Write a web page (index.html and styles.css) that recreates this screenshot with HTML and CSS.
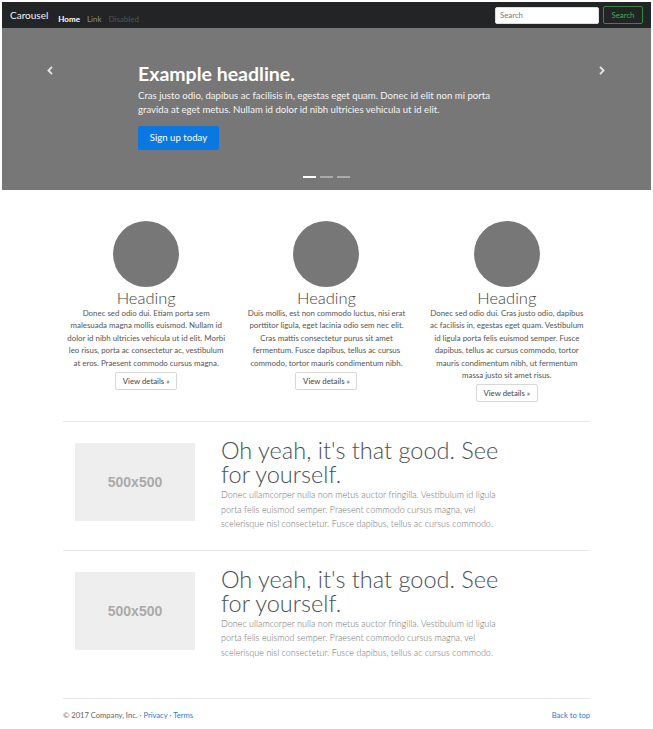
FILE: index.html
```html
<!DOCTYPE html>
<html lang="en">
<head>
<meta charset="utf-8">
<title>Carousel Template</title>
<link rel="stylesheet" href="styles.css">
</head>
<body>
<div class="page">
  <nav class="navbar">
    <a class="brand" href="#">Carousel</a>
    <ul class="nav">
      <li><a class="nav-link active" href="#">Home</a></li>
      <li><a class="nav-link" href="#">Link</a></li>
      <li><a class="nav-link disabled" href="#">Disabled</a></li>
    </ul>
    <form class="search">
      <input class="search-input" type="text" placeholder="Search">
      <button class="search-btn" type="button">Search</button>
    </form>
  </nav>

  <section class="carousel">
    <a class="ctrl prev" href="#" aria-label="Previous">
      <svg width="6" height="9" viewBox="0 0 6 9"><path d="M5 0.8 L1.4 4.5 L5 8.2" fill="none" stroke="#e6e6e6" stroke-width="1.8"/></svg>
    </a>
    <div class="caption">
      <h1 class="headline">Example headline.</h1>
      <p class="caption-text">Cras justo odio, dapibus ac facilisis in, egestas eget quam. Donec id elit non mi porta gravida at eget metus. Nullam id dolor id nibh ultricies vehicula ut id elit.</p>
      <a class="btn-primary" href="#">Sign up today</a>
    </div>
    <a class="ctrl next" href="#" aria-label="Next">
      <svg width="6" height="9" viewBox="0 0 6 9"><path d="M1 0.8 L4.6 4.5 L1 8.2" fill="none" stroke="#e6e6e6" stroke-width="1.8"/></svg>
    </a>
    <ol class="indicators">
      <li class="active"></li>
      <li></li>
      <li></li>
    </ol>
  </section>

  <main class="container">
    <div class="marketing">
      <div class="col">
        <div class="circle"></div>
        <h2 class="col-heading">Heading</h2>
        <p class="col-text">Donec sed odio dui. Etiam porta sem malesuada magna mollis euismod. Nullam id dolor id nibh ultricies vehicula ut id elit. Morbi leo risus, porta ac consectetur ac, vestibulum at eros. Praesent commodo cursus magna.</p>
        <a class="btn-secondary" href="#">View details »</a>
      </div>
      <div class="col">
        <div class="circle"></div>
        <h2 class="col-heading">Heading</h2>
        <p class="col-text">Duis mollis, est non commodo luctus, nisi erat porttitor ligula, eget lacinia odio sem nec elit. Cras mattis consectetur purus sit amet fermentum. Fusce dapibus, tellus ac cursus commodo, tortor mauris condimentum nibh.</p>
        <a class="btn-secondary" href="#">View details »</a>
      </div>
      <div class="col">
        <div class="circle"></div>
        <h2 class="col-heading">Heading</h2>
        <p class="col-text">Donec sed odio dui. Cras justo odio, dapibus ac facilisis in, egestas eget quam. Vestibulum id ligula porta felis euismod semper. Fusce dapibus, tellus ac cursus commodo, tortor mauris condimentum nibh, ut fermentum massa justo sit amet risus.</p>
        <a class="btn-secondary" href="#">View details »</a>
      </div>
    </div>

    <hr class="divider">

    <div class="featurette">
      <div class="placeholder">500x500</div>
      <div class="feat-body">
        <h2 class="feat-heading">Oh yeah, it's that good. See for yourself.</h2>
        <p class="feat-text">Donec ullamcorper nulla non metus auctor fringilla. Vestibulum id ligula porta felis euismod semper. Praesent commodo cursus magna, vel scelerisque nisl consectetur. Fusce dapibus, tellus ac cursus commodo.</p>
      </div>
    </div>

    <hr class="divider">

    <div class="featurette">
      <div class="placeholder">500x500</div>
      <div class="feat-body">
        <h2 class="feat-heading">Oh yeah, it's that good. See for yourself.</h2>
        <p class="feat-text">Donec ullamcorper nulla non metus auctor fringilla. Vestibulum id ligula porta felis euismod semper. Praesent commodo cursus magna, vel scelerisque nisl consectetur. Fusce dapibus, tellus ac cursus commodo.</p>
      </div>
    </div>

    <hr class="divider divider-footer">

    <footer class="footer">
      <p class="copy">© 2017 Company, Inc. · <a href="#">Privacy</a> · <a href="#">Terms</a></p>
      <a class="top-link" href="#">Back to top</a>
    </footer>
  </main>
</div>
</body>
</html>
```

FILE: styles.css
```css
* { box-sizing: border-box; }

html, body {
  margin: 0;
  padding: 0;
  background: #fff;
}

body {
  font-family: Lato, "Open Sans", "Noto Sans", sans-serif;
  color: #333;
}

a { text-decoration: none; }

.page {
  padding: 2px;
  width: 653px;
}

/* Navbar */
.navbar {
  height: 26px;
  background: #232425;
  display: flex;
  align-items: center;
  padding: 0 8px;
}

.brand {
  color: #f2f2f2;
  font-size: 10px;
  margin-right: 10px;
}

.nav {
  list-style: none;
  margin: 0;
  padding: 0;
  display: flex;
  gap: 7px;
}

.nav-link {
  font-size: 8px;
  color: #8c8c8c;
}

.nav-link.active { color: #ffffff; font-weight: 700; }
.nav-link.disabled { color: #555; }

.search {
  margin-left: auto;
  display: flex;
  align-items: center;
  gap: 4px;
}

.search-input {
  width: 104px;
  height: 17px;
  border: 1px solid #ddd;
  border-radius: 2px;
  padding: 0 4px;
  font-family: inherit;
  font-size: 7.8px;
  background: #fff;
  outline: none;
}

.search-input::placeholder { color: #777; }

.search-btn {
  height: 18px;
  width: 40px;
  background: transparent;
  border: 1px solid #2f8b3e;
  border-radius: 2px;
  color: #3fae51;
  font-family: inherit;
  font-size: 7.8px;
  padding: 0;
}

/* Carousel */
.carousel {
  position: relative;
  height: 162px;
  background: #777;
}

.caption {
  width: 377px;
  margin: 0 auto;
  padding-top: 34px;
  color: #fff;
}

.headline {
  margin: 0 0 4px;
  font-size: 19.5px;
  line-height: 23px;
  font-weight: 700;
}

.caption-text {
  margin: 0 0 8px;
  font-size: 9.6px;
  line-height: 14px;
  color: #f4f4f4;
}

.btn-primary {
  display: inline-flex;
  align-items: center;
  justify-content: center;
  width: 81px;
  height: 24px;
  background: #0a78e0;
  border-radius: 2px;
  color: #fff;
  font-size: 9.6px;
}

.ctrl {
  position: absolute;
  top: 38px;
  display: block;
  width: 6px;
  height: 9px;
}

.ctrl svg { display: block; }
.prev { left: 45px; }
.next { left: 597px; }

.indicators {
  position: absolute;
  top: 148px;
  left: 0;
  right: 0;
  margin: 0;
  padding: 0;
  list-style: none;
  display: flex;
  justify-content: center;
  gap: 4px;
}

.indicators li {
  width: 13px;
  height: 2px;
  background: #aaa;
}

.indicators li.active { background: #fff; }

/* Container */
.container {
  width: 527px;
  margin: 0 auto;
}

.marketing {
  display: grid;
  grid-template-columns: repeat(3, 1fr);
  align-items: start;
  margin: 31px -7px 0;
}

.col {
  padding: 0 11px;
  text-align: center;
  display: flex;
  flex-direction: column;
  align-items: center;
}

.circle {
  width: 66px;
  height: 66px;
  border-radius: 50%;
  background: #777;
}

.col-heading {
  margin: 2px 0 0;
  font-size: 16.5px;
  line-height: 18px;
  font-weight: 300;
  color: #444;
}

.col-text {
  margin: 0 0 3px;
  font-size: 7.9px;
  line-height: 12.4px;
  color: #555;
}

.btn-secondary {
  display: flex;
  align-items: center;
  justify-content: center;
  width: 62px;
  height: 18px;
  border: 1px solid #d8d8d8;
  border-radius: 2px;
  color: #444;
  font-size: 7.8px;
}

.divider {
  border: 0;
  border-top: 1px solid #e8e8e8;
  margin: 19px 0 16px;
}

.featurette + .divider {
  margin-top: 18px;
}

.divider-footer,
.featurette + .divider-footer {
  margin: 38px 0 10px;
}

/* Featurettes */
.featurette {
  display: flex;
  align-items: flex-start;
  gap: 26px;
  padding-left: 12px;
}

.placeholder {
  flex: none;
  width: 120px;
  height: 78px;
  margin-top: 5px;
  background: #eee;
  color: #aaa;
  font-family: "Liberation Sans", Arial, sans-serif;
  font-weight: 700;
  font-size: 14px;
  display: flex;
  align-items: center;
  justify-content: center;
}

.feat-body {
  width: 291px;
}

.feat-heading {
  margin: 0 0 2px;
  font-size: 23.5px;
  line-height: 24px;
  font-weight: 300;
  color: #4a4f55;
}

.feat-text {
  margin: 0;
  font-size: 9px;
  line-height: 14.5px;
  font-weight: 300;
  color: #707070;
}

/* Footer */
.footer {
  display: flex;
  justify-content: space-between;
  align-items: center;
  font-size: 7.6px;
  line-height: 12px;
}

.copy {
  margin: 0;
  color: #666;
}

.footer a { color: #2a7bd6; }
```
